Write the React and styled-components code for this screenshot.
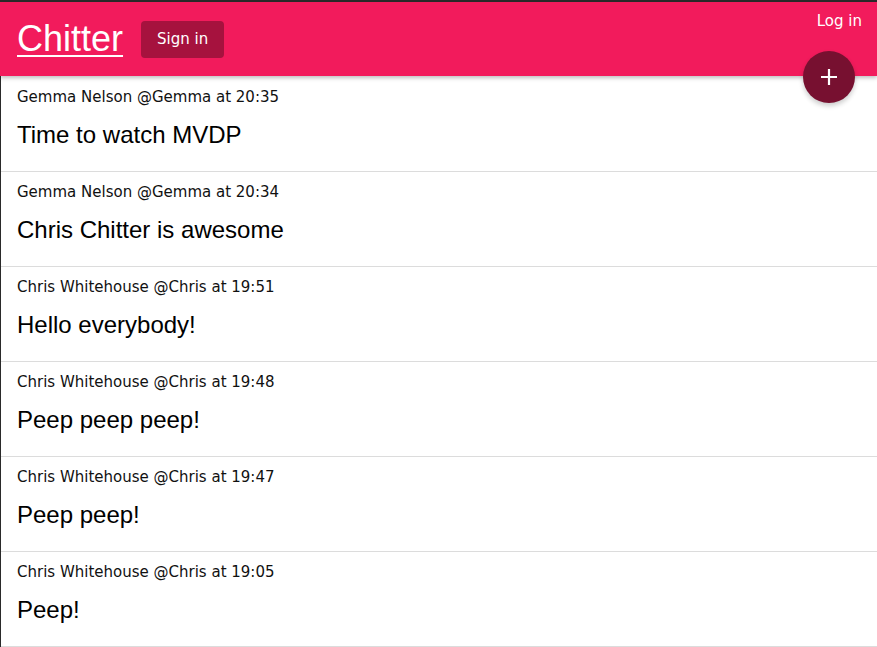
import styled, { createGlobalStyle } from 'styled-components';

const GlobalStyle = createGlobalStyle`
  body {
    margin: 0;
    background: #fff;
    font-family: "Liberation Sans", Arial, sans-serif;
  }
`;

const Page = styled.div`
  position: relative;
  min-height: 645px;
  border-top: 2px solid #2a2a2a;
  border-left: 1px solid #2a2a2a;
`;

const Header = styled.header`
  position: relative;
  z-index: 1;
  display: flex;
  align-items: center;
  gap: 18px;
  height: 74px;
  margin-left: -1px;
  padding: 0 15px 0 17px;
  background: #f21b5c;
  box-shadow: 0 2px 4px rgba(0, 0, 0, 0.25);
`;

const Logo = styled.a`
  color: #fff;
  font-size: 36px;
  line-height: 40px;
  text-decoration: underline;
  text-decoration-thickness: 2px;
  text-underline-offset: 4px;
  cursor: pointer;
`;

const SignIn = styled.button`
  height: 37px;
  padding: 0 16px;
  border: none;
  border-radius: 4px;
  background: #a6123e;
  color: #fff;
  font-family: "DejaVu Sans", Verdana, sans-serif;
  font-size: 15px;
  font-weight: 500;
  cursor: pointer;
`;

const LogIn = styled.button`
  align-self: flex-start;
  margin: 11px 0 0 auto;
  padding: 0;
  border: none;
  background: none;
  color: #fff;
  font-family: "DejaVu Sans", Verdana, sans-serif;
  font-size: 15px;
  line-height: 17px;
  cursor: pointer;
`;

const Fab = styled.button`
  position: absolute;
  z-index: 2;
  top: 49px;
  right: 22px;
  display: flex;
  align-items: center;
  justify-content: center;
  width: 52px;
  height: 52px;
  padding: 0;
  border: none;
  border-radius: 50%;
  background: #771030;
  box-shadow: 0 3px 5px rgba(0, 0, 0, 0.2);
  cursor: pointer;
`;

const List = styled.ul`
  margin: 0;
  padding: 1px 0 0;
  list-style: none;
`;

const Peep = styled.li`
  padding: 12px 16px 22px;
  border-bottom: 1px solid #dcdcdc;
`;

const Meta = styled.div`
  margin-bottom: 16px;
  color: #111;
  font-family: "DejaVu Sans", Verdana, sans-serif;
  font-size: 15px;
  line-height: 16px;
`;

const Body = styled.div`
  color: #000;
  font-size: 24px;
  line-height: 28px;
`;

const peeps = [
  { name: 'Gemma Nelson', handle: 'Gemma', time: '20:35', body: 'Time to watch MVDP' },
  { name: 'Gemma Nelson', handle: 'Gemma', time: '20:34', body: 'Chris Chitter is awesome' },
  { name: 'Chris Whitehouse', handle: 'Chris', time: '19:51', body: 'Hello everybody!' },
  { name: 'Chris Whitehouse', handle: 'Chris', time: '19:48', body: 'Peep peep peep!' },
  { name: 'Chris Whitehouse', handle: 'Chris', time: '19:47', body: 'Peep peep!' },
  { name: 'Chris Whitehouse', handle: 'Chris', time: '19:05', body: 'Peep!' },
];

export default function App() {
  return (
    <>
      <GlobalStyle />
      <Page>
        <Header>
          <Logo>Chitter</Logo>
          <SignIn>Sign in</SignIn>
          <LogIn>Log in</LogIn>
        </Header>
        <Fab aria-label='add'>
          <svg width='20' height='20' viewBox='0 0 20 20'>
            <path d='M10 2v16M2 10h16' stroke='#fff' strokeWidth='2.2' />
          </svg>
        </Fab>
        <List>
          {peeps.map((p) => (
            <Peep key={p.time}>
              <Meta>
                {p.name} @{p.handle} at {p.time}
              </Meta>
              <Body>{p.body}</Body>
            </Peep>
          ))}
        </List>
      </Page>
    </>
  );
}
